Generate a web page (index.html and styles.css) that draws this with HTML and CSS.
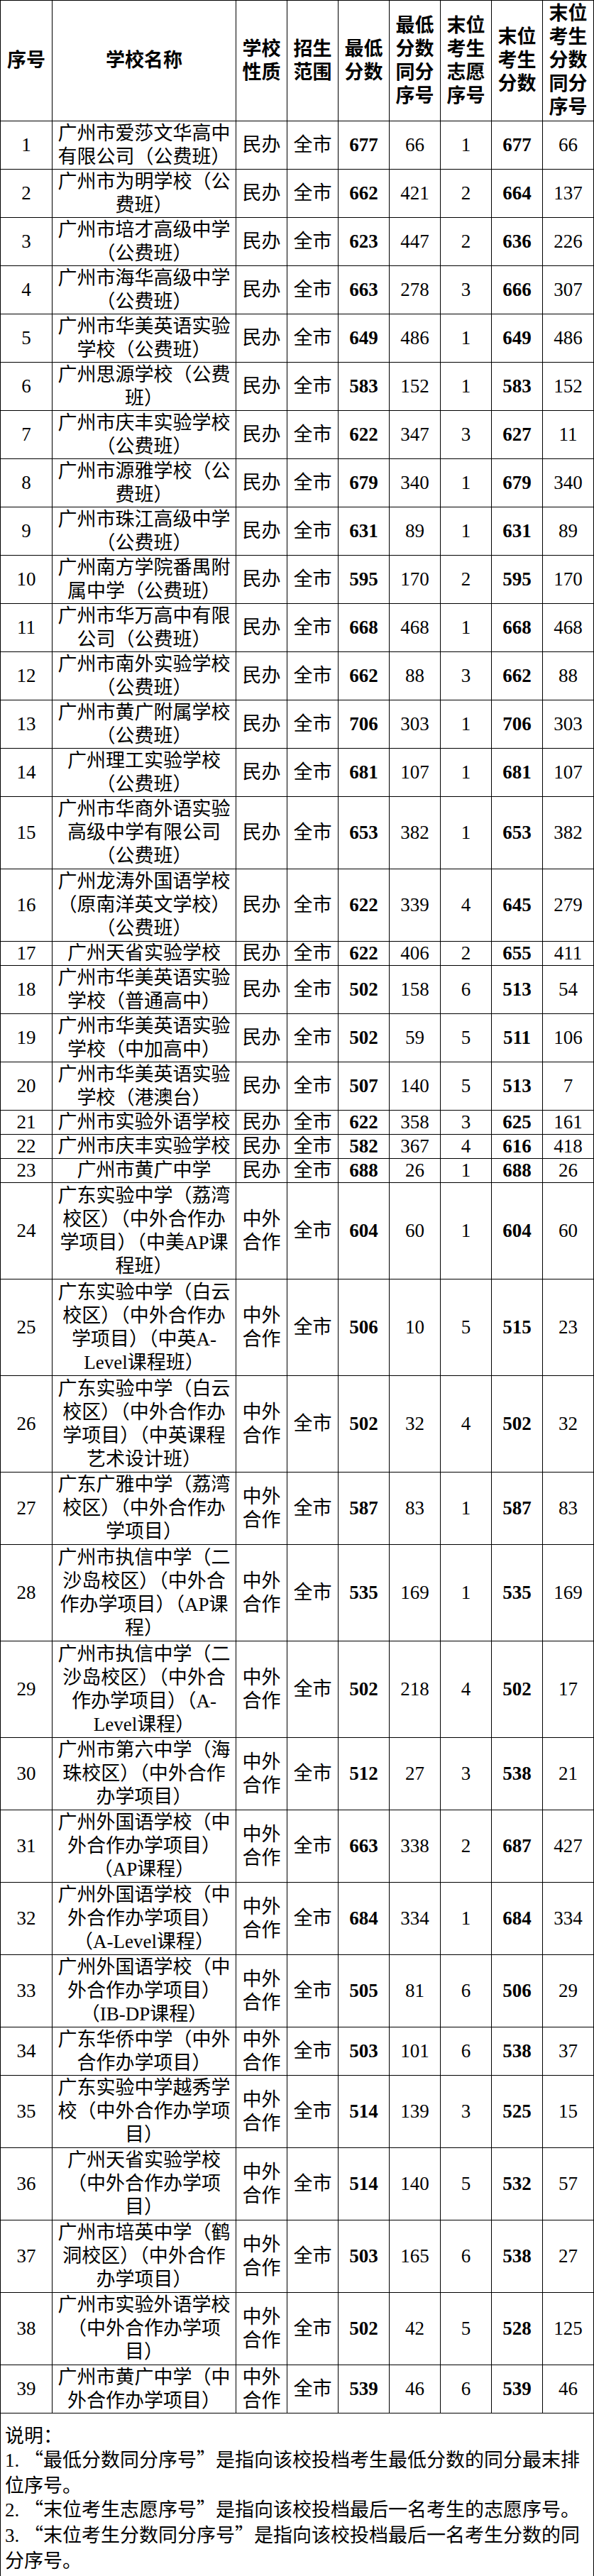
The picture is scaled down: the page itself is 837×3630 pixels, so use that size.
FILE: index.html
```html
<!DOCTYPE html>
<html lang="zh-CN">
<head>
<meta charset="utf-8">
<title>投档分数线</title>
<link rel="stylesheet" href="styles.css">
</head>
<body>
<table class="score-table">
<colgroup>
<col class="c-seq"><col class="c-name"><col class="c-n"><col class="c-n"><col class="c-n"><col class="c-n"><col class="c-n"><col class="c-n"><col class="c-n">
</colgroup>
<thead>
<tr class="h5"><th>序号</th><th>学校名称</th><th>学校性质</th><th>招生范围</th><th>最低分数</th><th>最低分数同分序号</th><th>末位考生志愿序号</th><th>末位考生分数</th><th>末位考生分数同分序号</th></tr>
</thead>
<tbody>
<tr class="h2"><td>1</td><td class="name">广州市爱莎文华高中<br>有限公司（公费班）</td><td>民办</td><td>全市</td><td class="b">677</td><td>66</td><td>1</td><td class="b">677</td><td>66</td></tr>
<tr class="h2"><td>2</td><td class="name">广州市为明学校（公<br>费班）</td><td>民办</td><td>全市</td><td class="b">662</td><td>421</td><td>2</td><td class="b">664</td><td>137</td></tr>
<tr class="h2"><td>3</td><td class="name">广州市培才高级中学<br>（公费班）</td><td>民办</td><td>全市</td><td class="b">623</td><td>447</td><td>2</td><td class="b">636</td><td>226</td></tr>
<tr class="h2"><td>4</td><td class="name">广州市海华高级中学<br>（公费班）</td><td>民办</td><td>全市</td><td class="b">663</td><td>278</td><td>3</td><td class="b">666</td><td>307</td></tr>
<tr class="h2"><td>5</td><td class="name">广州市华美英语实验<br>学校（公费班）</td><td>民办</td><td>全市</td><td class="b">649</td><td>486</td><td>1</td><td class="b">649</td><td>486</td></tr>
<tr class="h2"><td>6</td><td class="name">广州思源学校（公费<br>班）</td><td>民办</td><td>全市</td><td class="b">583</td><td>152</td><td>1</td><td class="b">583</td><td>152</td></tr>
<tr class="h2"><td>7</td><td class="name">广州市庆丰实验学校<br>（公费班）</td><td>民办</td><td>全市</td><td class="b">622</td><td>347</td><td>3</td><td class="b">627</td><td>11</td></tr>
<tr class="h2"><td>8</td><td class="name">广州市源雅学校（公<br>费班）</td><td>民办</td><td>全市</td><td class="b">679</td><td>340</td><td>1</td><td class="b">679</td><td>340</td></tr>
<tr class="h2"><td>9</td><td class="name">广州市珠江高级中学<br>（公费班）</td><td>民办</td><td>全市</td><td class="b">631</td><td>89</td><td>1</td><td class="b">631</td><td>89</td></tr>
<tr class="h2"><td>10</td><td class="name">广州南方学院番禺附<br>属中学（公费班）</td><td>民办</td><td>全市</td><td class="b">595</td><td>170</td><td>2</td><td class="b">595</td><td>170</td></tr>
<tr class="h2"><td>11</td><td class="name">广州市华万高中有限<br>公司（公费班）</td><td>民办</td><td>全市</td><td class="b">668</td><td>468</td><td>1</td><td class="b">668</td><td>468</td></tr>
<tr class="h2"><td>12</td><td class="name">广州市南外实验学校<br>（公费班）</td><td>民办</td><td>全市</td><td class="b">662</td><td>88</td><td>3</td><td class="b">662</td><td>88</td></tr>
<tr class="h2"><td>13</td><td class="name">广州市黄广附属学校<br>（公费班）</td><td>民办</td><td>全市</td><td class="b">706</td><td>303</td><td>1</td><td class="b">706</td><td>303</td></tr>
<tr class="h2"><td>14</td><td class="name">广州理工实验学校<br>（公费班）</td><td>民办</td><td>全市</td><td class="b">681</td><td>107</td><td>1</td><td class="b">681</td><td>107</td></tr>
<tr class="h3"><td>15</td><td class="name">广州市华商外语实验<br>高级中学有限公司<br>（公费班）</td><td>民办</td><td>全市</td><td class="b">653</td><td>382</td><td>1</td><td class="b">653</td><td>382</td></tr>
<tr class="h3"><td>16</td><td class="name">广州龙涛外国语学校<br>（原南洋英文学校）<br>（公费班）</td><td>民办</td><td>全市</td><td class="b">622</td><td>339</td><td>4</td><td class="b">645</td><td>279</td></tr>
<tr class="h1"><td>17</td><td class="name">广州天省实验学校</td><td>民办</td><td>全市</td><td class="b">622</td><td>406</td><td>2</td><td class="b">655</td><td>411</td></tr>
<tr class="h2"><td>18</td><td class="name">广州市华美英语实验<br>学校（普通高中）</td><td>民办</td><td>全市</td><td class="b">502</td><td>158</td><td>6</td><td class="b">513</td><td>54</td></tr>
<tr class="h2"><td>19</td><td class="name">广州市华美英语实验<br>学校（中加高中）</td><td>民办</td><td>全市</td><td class="b">502</td><td>59</td><td>5</td><td class="b">511</td><td>106</td></tr>
<tr class="h2"><td>20</td><td class="name">广州市华美英语实验<br>学校（港澳台）</td><td>民办</td><td>全市</td><td class="b">507</td><td>140</td><td>5</td><td class="b">513</td><td>7</td></tr>
<tr class="h1"><td>21</td><td class="name">广州市实验外语学校</td><td>民办</td><td>全市</td><td class="b">622</td><td>358</td><td>3</td><td class="b">625</td><td>161</td></tr>
<tr class="h1"><td>22</td><td class="name">广州市庆丰实验学校</td><td>民办</td><td>全市</td><td class="b">582</td><td>367</td><td>4</td><td class="b">616</td><td>418</td></tr>
<tr class="h1"><td>23</td><td class="name">广州市黄广中学</td><td>民办</td><td>全市</td><td class="b">688</td><td>26</td><td>1</td><td class="b">688</td><td>26</td></tr>
<tr class="h4"><td>24</td><td class="name">广东实验中学（荔湾<br>校区）（中外合作办<br>学项目）（中美AP课<br>程班）</td><td>中外合作</td><td>全市</td><td class="b">604</td><td>60</td><td>1</td><td class="b">604</td><td>60</td></tr>
<tr class="h4"><td>25</td><td class="name">广东实验中学（白云<br>校区）（中外合作办<br>学项目）（中英A-<br>Level课程班）</td><td>中外合作</td><td>全市</td><td class="b">506</td><td>10</td><td>5</td><td class="b">515</td><td>23</td></tr>
<tr class="h4"><td>26</td><td class="name">广东实验中学（白云<br>校区）（中外合作办<br>学项目）（中英课程<br>艺术设计班）</td><td>中外合作</td><td>全市</td><td class="b">502</td><td>32</td><td>4</td><td class="b">502</td><td>32</td></tr>
<tr class="h3"><td>27</td><td class="name">广东广雅中学（荔湾<br>校区）（中外合作办<br>学项目）</td><td>中外合作</td><td>全市</td><td class="b">587</td><td>83</td><td>1</td><td class="b">587</td><td>83</td></tr>
<tr class="h4"><td>28</td><td class="name">广州市执信中学（二<br>沙岛校区）（中外合<br>作办学项目）（AP课<br>程）</td><td>中外合作</td><td>全市</td><td class="b">535</td><td>169</td><td>1</td><td class="b">535</td><td>169</td></tr>
<tr class="h4"><td>29</td><td class="name">广州市执信中学（二<br>沙岛校区）（中外合<br>作办学项目）（A-<br>Level课程）</td><td>中外合作</td><td>全市</td><td class="b">502</td><td>218</td><td>4</td><td class="b">502</td><td>17</td></tr>
<tr class="h3"><td>30</td><td class="name">广州市第六中学（海<br>珠校区）（中外合作<br>办学项目）</td><td>中外合作</td><td>全市</td><td class="b">512</td><td>27</td><td>3</td><td class="b">538</td><td>21</td></tr>
<tr class="h3"><td>31</td><td class="name">广州外国语学校（中<br>外合作办学项目）<br>（AP课程）</td><td>中外合作</td><td>全市</td><td class="b">663</td><td>338</td><td>2</td><td class="b">687</td><td>427</td></tr>
<tr class="h3"><td>32</td><td class="name">广州外国语学校（中<br>外合作办学项目）<br>（A-Level课程）</td><td>中外合作</td><td>全市</td><td class="b">684</td><td>334</td><td>1</td><td class="b">684</td><td>334</td></tr>
<tr class="h3"><td>33</td><td class="name">广州外国语学校（中<br>外合作办学项目）<br>（IB-DP课程）</td><td>中外合作</td><td>全市</td><td class="b">505</td><td>81</td><td>6</td><td class="b">506</td><td>29</td></tr>
<tr class="h2"><td>34</td><td class="name">广东华侨中学（中外<br>合作办学项目）</td><td>中外合作</td><td>全市</td><td class="b">503</td><td>101</td><td>6</td><td class="b">538</td><td>37</td></tr>
<tr class="h3"><td>35</td><td class="name">广东实验中学越秀学<br>校（中外合作办学项<br>目）</td><td>中外合作</td><td>全市</td><td class="b">514</td><td>139</td><td>3</td><td class="b">525</td><td>15</td></tr>
<tr class="h3"><td>36</td><td class="name">广州天省实验学校<br>（中外合作办学项<br>目）</td><td>中外合作</td><td>全市</td><td class="b">514</td><td>140</td><td>5</td><td class="b">532</td><td>57</td></tr>
<tr class="h3"><td>37</td><td class="name">广州市培英中学（鹤<br>洞校区）（中外合作<br>办学项目）</td><td>中外合作</td><td>全市</td><td class="b">503</td><td>165</td><td>6</td><td class="b">538</td><td>27</td></tr>
<tr class="h3"><td>38</td><td class="name">广州市实验外语学校<br>（中外合作办学项<br>目）</td><td>中外合作</td><td>全市</td><td class="b">502</td><td>42</td><td>5</td><td class="b">528</td><td>125</td></tr>
<tr class="h2"><td>39</td><td class="name">广州市黄广中学（中<br>外合作办学项目）</td><td>中外合作</td><td>全市</td><td class="b">539</td><td>46</td><td>6</td><td class="b">539</td><td>46</td></tr>
<tr class="notes"><td colspan="9">说明：<br><span class="lat">1.</span>“最低分数同分序号”是指向该校投档考生最低分数的同分最末排<br>位序号。<br><span class="lat">2.</span>“末位考生志愿序号”是指向该校投档最后一名考生的志愿序号。<br><span class="lat">3.</span>“末位考生分数同分序号”是指向该校投档最后一名考生分数的同<br>分序号。</td></tr>
</tbody>
</table>
</body>
</html>
```
FILE: styles.css
```css
html, body {
  margin: 0;
  padding: 0;
  background: #fff;
}

body {
  color: #000;
  font-family: "Liberation Serif", "Noto Sans CJK SC", serif;
}

.score-table {
  width: 837px;
  table-layout: fixed;
  border-collapse: collapse;
  font-size: 27px;
}

.c-seq { width: 73px; }
.c-name { width: 259px; }
.c-n { width: 72px; }

.score-table th,
.score-table td {
  border: 1px solid #000;
  padding: 0;
  text-align: center;
  vertical-align: middle;
  line-height: 33px;
  font-weight: 400;
}

.score-table th {
  font-weight: 700;
}

.score-table td.b {
  font-weight: 700;
}

.score-table td.name {
  white-space: nowrap;
}

.h1 { height: 34px; }
.h2 { height: 68px; }
.h3 { height: 102px; }
.h4 { height: 136px; }
.h5 { height: 170px; }

.score-table .notes td {
  text-align: left;
  white-space: nowrap;
  line-height: 34px;
  padding: 13px 6px 12px;
  font-family: "Noto Sans CJK SC", sans-serif;
}

.notes .lat {
  display: inline-block;
  width: 27px;
  font-family: "Liberation Serif", serif;
}
```
